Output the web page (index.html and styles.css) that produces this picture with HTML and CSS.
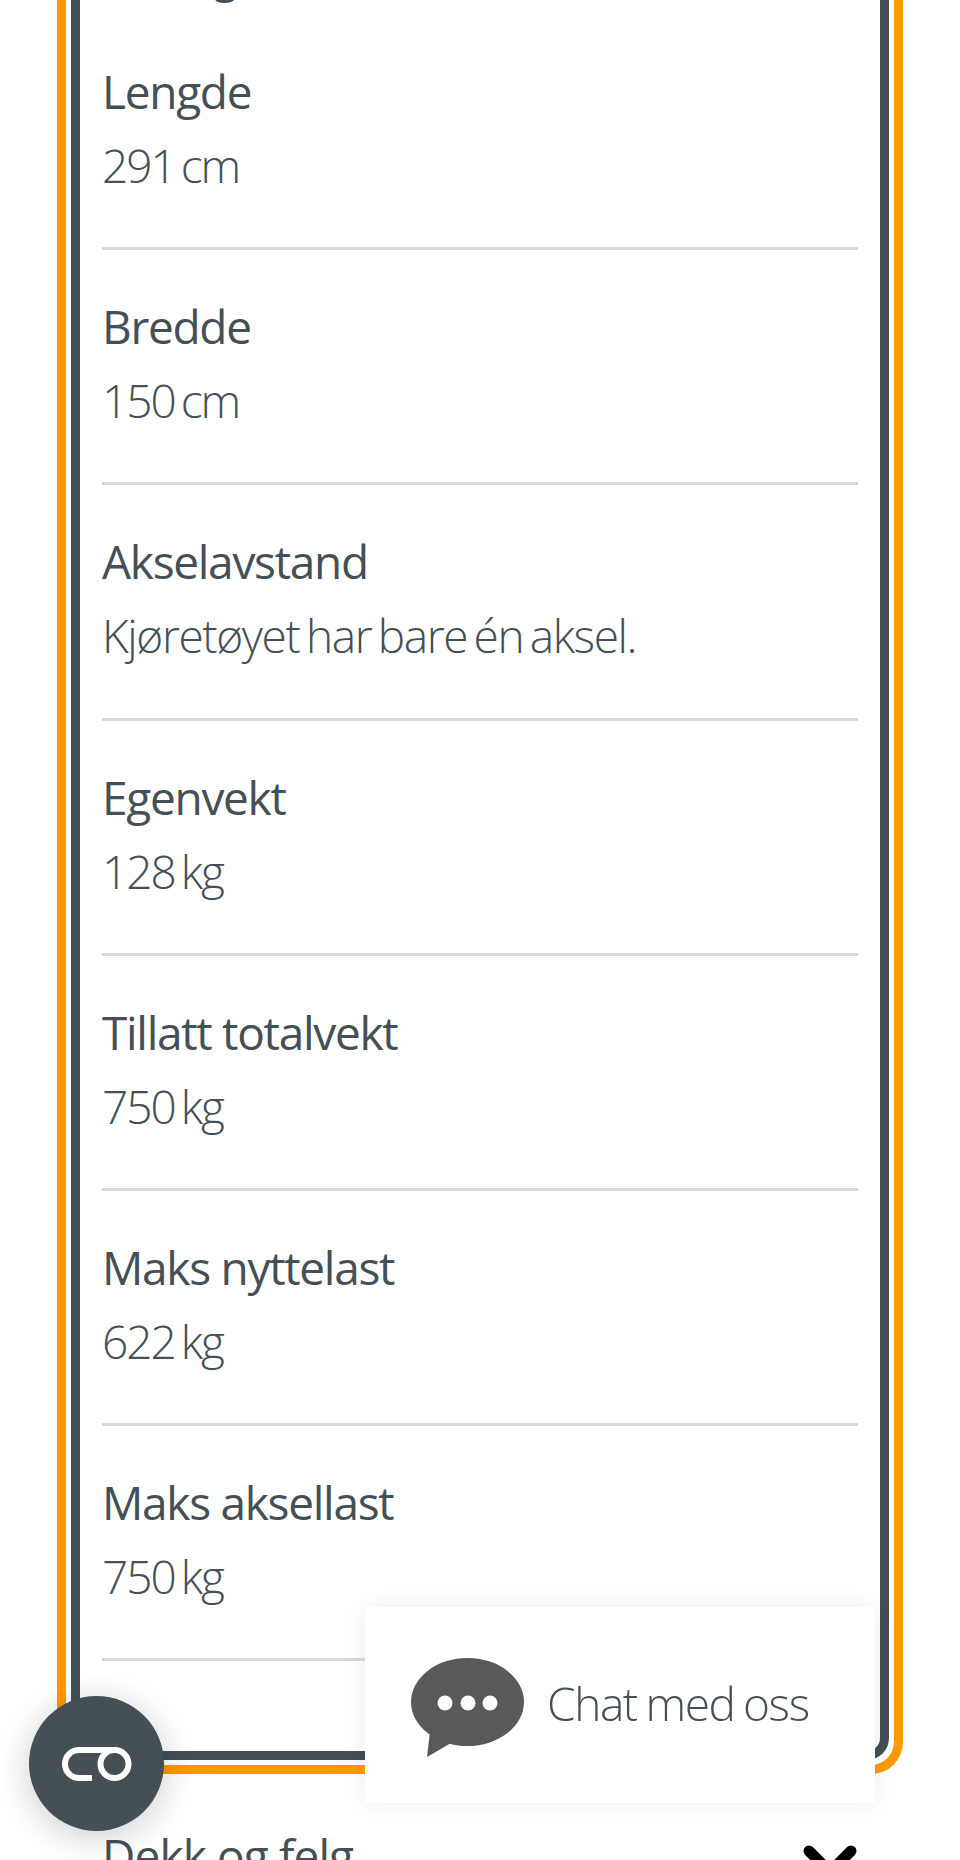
FILE: index.html
```html
<!DOCTYPE html>
<html lang="no">
<head>
<meta charset="utf-8">
<title>Kjøretøy</title>
<link rel="stylesheet" href="styles.css">
</head>
<body>
<main class="page">
  <section class="frame">
    <div class="inner">
      <h2 class="group-title">Mål og vekt</h2>
      <dl class="spec-list">
        <div class="spec"><dt>Lengde</dt><dd>291 cm</dd></div>
        <div class="spec"><dt>Bredde</dt><dd>150 cm</dd></div>
        <div class="spec"><dt>Akselavstand</dt><dd class="sentence">Kjøretøyet har bare én aksel.</dd></div>
        <div class="spec"><dt>Egenvekt</dt><dd>128 kg</dd></div>
        <div class="spec"><dt>Tillatt totalvekt</dt><dd>750 kg</dd></div>
        <div class="spec"><dt>Maks nyttelast</dt><dd>622 kg</dd></div>
        <div class="spec"><dt>Maks aksellast</dt><dd>750 kg</dd></div>
      </dl>
    </div>
  </section>
  <section class="next-row">
    <h3 class="next-title">Dekk og felg</h3>
    <svg class="chevron" viewBox="0 0 54 40" aria-hidden="true"><path d="M6 6 L27 27 L48 6" fill="none" stroke="#000" stroke-width="11" stroke-linecap="round"/></svg>
  </section>
</main>
<button class="fab" aria-label="Innstillinger">
  <svg class="fab-icon" viewBox="0 0 70 34" aria-hidden="true">
    <path d="M30 31 H17 a14 14 0 0 1 0 -28 H52" fill="none" stroke="#fff" stroke-width="6"/>
    <circle cx="52.5" cy="17" r="14" fill="none" stroke="#fff" stroke-width="6"/>
  </svg>
</button>
<aside class="chat">
  <svg class="chat-icon" viewBox="0 0 113 99" aria-hidden="true">
    <ellipse cx="56.5" cy="44" rx="56.5" ry="44" fill="#595959"/>
    <path d="M19 74 L16 99 L40 85 Z" fill="#595959"/>
    <circle cx="34" cy="45" r="7.5" fill="#fff"/>
    <circle cx="57" cy="45" r="7.5" fill="#fff"/>
    <circle cx="79" cy="45" r="7.5" fill="#fff"/>
  </svg>
  <span class="chat-label">Chat med oss</span>
</aside>
</body>
</html>
```
FILE: styles.css
```css
html, body {
  margin: 0;
  padding: 0;
  height: 1860px;
  overflow: hidden;
  background: #fff;
  font-family: "Open Sans", "Liberation Sans", sans-serif;
  color: #444f56;
}
.page {
  padding: 0 57px;
  margin-top: -53px;
}
.frame {
  border: 9px solid #ff9900;
  border-top: 0;
  border-radius: 0 0 32px 32px;
  padding: 0 5px 5px;
}
.inner {
  border: 9px solid #444f56;
  border-top: 0;
  border-radius: 0 0 22px 22px;
  padding: 0 22px 90px 22px;
}
.group-title {
  margin: 0 0 8px;
  font-size: 41px;
  font-weight: 700;
  line-height: 60px;
}
.spec-list {
  margin: 0;
}
.spec {
  height: 235.2px;
  box-sizing: border-box;
  border-bottom: 3px solid #d8d8d8;
  padding-top: 46px;
}
.spec dt {
  font-size: 46px;
  font-weight: 400;
  line-height: 60px;
  letter-spacing: -1.3px;
}
.spec dd {
  margin: 14px 0 0;
  font-size: 46px;
  font-weight: 300;
  line-height: 60px;
  letter-spacing: -2px;
  word-spacing: -4px;
}
.spec dd.sentence {
  letter-spacing: -1.4px;
}
.next-row {
  display: flex;
  justify-content: space-between;
  align-items: flex-start;
  padding: 51px 46px 0 45px;
}
.next-title {
  margin: 0;
  font-size: 46px;
  font-weight: 400;
  line-height: 60px;
  letter-spacing: -0.9px;
}
.chevron {
  width: 54px;
  height: 40px;
  margin-top: 20px;
}
.fab {
  position: fixed;
  left: 29px;
  top: 1696px;
  width: 135px;
  height: 135px;
  border: 0;
  border-radius: 50%;
  background: #444f56;
  box-shadow: 0 6px 36px rgba(0, 0, 0, 0.2);
  display: flex;
  align-items: center;
  justify-content: center;
  padding: 0;
}
.fab-icon {
  width: 70px;
  height: 34px;
}
.chat {
  position: fixed;
  left: 365px;
  top: 1607px;
  width: 510px;
  height: 196px;
  background: #fff;
  box-shadow: 0 0 24px rgba(0, 0, 0, 0.08);
  display: flex;
  align-items: center;
  gap: 23px;
  padding-left: 46px;
  box-sizing: border-box;
}
.chat-icon {
  width: 113px;
  height: 99px;
  margin-top: 4px;
}
.chat-label {
  font-size: 46px;
  font-weight: 300;
  letter-spacing: -1.4px;
  word-spacing: -2px;
  margin-bottom: 4px;
}
```
